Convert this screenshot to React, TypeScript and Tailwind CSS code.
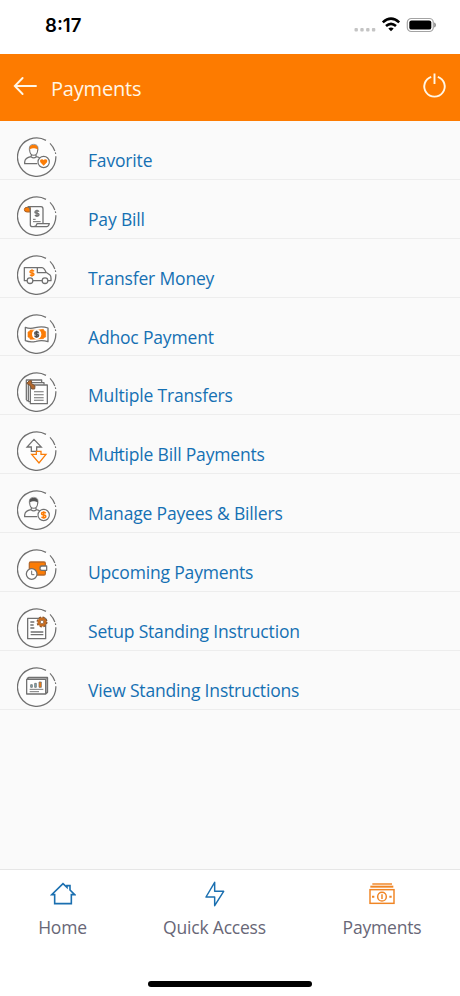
import React from "react";

interface MenuItem {
    label: string;
    icon: React.ReactNode;
    mark?: boolean;
}

const GRAY = "#707070";
const ORANGE = "#fb7c06";

const RingIcon: React.FC<{ children: React.ReactNode }> = ({ children }) => (
    <svg viewBox="0 0 120 120" className="h-10 w-10 shrink-0" fill="none" stroke={GRAY} strokeWidth="3.8" strokeLinejoin="round">
        <circle cx="59" cy="60" r="57.5" fill="#fdfdfd" stroke="none" />
        <path d="M87 10 A57.5 57.5 0 1 0 116.5 58" strokeWidth="3.8" />
        <path d="M99 19 Q109 29 113.5 42 M115 46 L116 51" strokeWidth="3.4" />
        {children}
    </svg>
);

const Dollar: React.FC<{ x: number; y: number; s?: number; color?: string }> = ({ x, y, s = 1, color = GRAY }) => (
    <path
        transform={`translate(${x} ${y}) scale(${s})`}
        d="M6 -5 Q4 -8 0 -8 Q-6 -8 -6 -4 Q-6 0 0 0 Q6 0 6 4 Q6 8 0 8 Q-4 8 -6 5 M0 -11 V11"
        stroke={color}
        strokeWidth="4.2"
    />
);

const Person: React.FC<{ hair: string }> = ({ hair }) => (
    <>
        <path d="M37 39 V34 Q37 23 50 23 Q63 23 63 34 V39 Q58 33 50 34 Q42 33 37 39 Z" fill={hair} stroke="none" />
        <path d="M37 40 V34 Q37 22 50 22 Q63 22 63 34 V40" strokeWidth="2" />
        <path d="M38 38 Q38 54 50 55 Q62 54 62 38" strokeWidth="3.2" />
        <path d="M43 54 V58 M57 54 V58" />
        <path d="M61 80 H23 V75 Q24 62 42 59 Q50 66 58 59 Q66 60 69 64" />
        <circle cx="80" cy="75" r="17" fill="#fff" strokeWidth="3.4" />
    </>
);

const items: MenuItem[] = [
    {
        label: "Favorite",
        icon: (
            <>
                <Person hair={ORANGE} />
                <path d="M80 86 L70 76 Q67 67 75 67 Q79 67 80 70 Q81 67 85 67 Q93 67 90 76 Z" fill={ORANGE} stroke="none" />
            </>
        ),
    },
    {
        label: "Pay Bill",
        icon: (
            <>
                <path d="M40 34 H30 Q22 34 22 41 Q22 48 30 48 H40 Z" fill={ORANGE} stroke="#a8642c" strokeWidth="3" />
                <path d="M32 32 H72 Q78 32 78 39 V82 M40 47 V87 Q40 92 47 92 H89 Q95 92 97 83 H60 Q58 92 50 92 M32 32 Q40 34 40 47" />
                <Dollar x={60} y={52} />
                <path d="M48 70 H56 M48 77 H71" strokeWidth="3" />
            </>
        ),
    },
    {
        label: "Transfer Money",
        icon: (
            <>
                <path d="M30 77 H22 V38 H75 Q82 39 87 52 L99 60 Q102 62 102 70 V77 H93 M76 77 H48" />
                <path d="M61 39 V53 H87" />
                <circle cx="39" cy="77" r="8.5" />
                <circle cx="84" cy="77" r="8.5" />
                <Dollar x={45} y={54} color={ORANGE} />
            </>
        ),
    },
    {
        label: "Adhoc Payment",
        icon: (
            <>
                <path d="M25 40 Q38 45 55 41 Q75 36 93 42 V83 Q75 77 57 82 Q40 86 25 80 Z" fill="#fff" />
                <path d="M40 48 Q58 50 79 46 Q80 52 86 53 V69 Q80 70 79 74 Q58 74 40 76 Q39 70 33 69 V54 Q39 53 40 48 Z" fill={ORANGE} stroke={ORANGE} strokeWidth="2" />
                <ellipse cx="59" cy="61" rx="14" ry="15" fill="#fff" stroke="none" />
                <ellipse cx="59" cy="61" rx="8" ry="11" fill="#bdbdbd" stroke="none" />
                <Dollar x={59} y={61} s={0.95} color="#4f4f4f" />
            </>
        ),
    },
    {
        label: "Multiple Transfers",
        icon: (
            <>
                <path d="M28 84 V24 H74 V30 M34 89 V32 H81 V38" />
                <path d="M28 86 H33 M34 89 H40" />
                <path d="M40 39 H91 V95 H40 Z" fill="#fff" />
                <path d="M51 59 H80 M51 68 H80 M51 77 H80 M51 85 H80" strokeWidth="3.2" />
                <path d="M29 34 L37 26 H44 L43 34 L54 42 L53 51 H44 L40 41 Z" fill="#b3672b" stroke="#7a5436" strokeWidth="3" />
            </>
        ),
    },
    {
        label: "Multiple Bill Payments",
        mark: true,
        icon: (
            <>
                <path d="M59 61 V48 H73 L51 25 L30 48 H43 V61 Z" strokeLinejoin="miter" />
                <path d="M58 61 H72 V70 H87 L66 96 L44 70 H58 Z" fill="#fafafa" stroke={ORANGE} strokeLinejoin="miter" />
            </>
        ),
    },
    {
        label: "Manage Payees & Billers",
        icon: (
            <>
                <Person hair="#555555" />
                <Dollar x={80} y={75} s={1.05} color={ORANGE} />
            </>
        ),
    },
    {
        label: "Upcoming Payments",
        icon: (
            <>
                <rect x="37" y="39" width="48" height="39" rx="4" fill={ORANGE} stroke="#b5682a" />
                <path d="M89 51 H74 Q69 51 69 58 Q69 64 74 64 H89 Z" fill="#fff" />
                <circle cx="44" cy="75" r="16" fill="#fff" />
                <path d="M44 65 V77 H52" strokeWidth="3" />
            </>
        ),
    },
    {
        label: "Setup Standing Instruction",
        icon: (
            <>
                <rect x="32" y="31" width="54" height="61" fill="#fff" />
                <path d="M40 42 H52 M40 51 H50 M40 60 H52 M41 72 H79 M41 80 H79" />
                <circle cx="75" cy="42" r="13.5" stroke="#7c5130" strokeWidth="6" strokeDasharray="6 4.6" />
                <circle cx="75" cy="42" r="9.5" fill="#fff" stroke="#c66d22" strokeWidth="8" />
                <circle cx="75" cy="42" r="5" fill="#fff" stroke="#7c5130" strokeWidth="2" />
            </>
        ),
    },
    {
        label: "View Standing Instructions",
        icon: (
            <>
                <path d="M30 35 L35 32 H91 V76 L86 80" strokeWidth="5" />
                <rect x="29" y="37" width="57" height="44" fill="#fff" />
                <path d="M41 53 H46 V61 H41 Z M53 49 H58 V61 H53 Z" fill="#7fb0ba" strokeWidth="2.4" />
                <path d="M66 45 H73 V61 H66 Z" fill={ORANGE} strokeWidth="2.4" />
                <path d="M38 67 H79 M38 74 H66" strokeWidth="2.8" />
            </>
        ),
    },
];

const StatusBar = () => (
    <div className="flex h-[54px] items-start justify-between bg-white pr-[23px] pl-[45px]">
        <span className="pt-[11px] font-[Inter,sans-serif] text-[18.6px] leading-7 font-semibold text-black">8:17</span>
        <div className="flex gap-[5px] pt-[16px]">
            <svg width="23" height="18" viewBox="0 0 23 18" fill="#c4c4c4">
                <rect x="1.5" y="12" width="3.4" height="3.4" rx="1" />
                <rect x="7.3" y="12" width="3.4" height="3.4" rx="1" />
                <rect x="13.1" y="12" width="3.4" height="3.4" rx="1" />
                <rect x="18.9" y="12" width="3.4" height="3.4" rx="1" />
            </svg>
            <svg width="20" height="18" viewBox="0 0 20 18" fill="none" stroke="#000" strokeWidth="2.6">
                <path d="M1.8 6.4 Q10 -1 18.2 6.4" />
                <path d="M5 10 Q10 5.6 15 10" />
                <path d="M10 15.2 L7.3 12.4 Q10 10.4 12.7 12.4 Z" fill="#000" stroke="none" />
            </svg>
            <svg width="31" height="18" viewBox="0 0 31 18">
                <rect x="1.3" y="2.5" width="26" height="13" rx="4" fill="none" stroke="#a3a3a3" strokeWidth="1.2" />
                <rect x="3.3" y="4.4" width="22" height="9.2" rx="2.2" fill="#000" />
                <path d="M28.7 6.8 Q30.4 9 28.7 11.2 Z" fill="#777" stroke="#777" strokeWidth="0.6" />
            </svg>
        </div>
    </div>
);

const Header = () => (
    <header className="flex h-[67px] items-center bg-[#fd7b00] pr-[13px] pl-[13px] text-white">
        <svg width="26" height="20" viewBox="0 0 26 20" className="mb-[3px]" fill="none" stroke="#fff6e6" strokeWidth="1.9" strokeLinecap="round">
            <path d="M23 10 H1.8 M9.6 2 L1.8 10 L9.6 18" />
        </svg>
        <h1 className="mt-0.5 ml-3 flex-1 text-[20px] leading-7 tracking-[-0.2px] text-[#fff6e6]">Payments</h1>
        <svg width="25" height="26" viewBox="0 0 25 26" className="mb-[6px]" fill="none" stroke="#fff6e6" strokeWidth="1.9">
            <path d="M9.2 4.8 A10.2 10.2 0 1 0 15.8 4.8 M12.5 1.5 V12" />
        </svg>
    </header>
);

const HomeIcon = () => (
    <svg width="26" height="24" viewBox="0 0 78 72" fill="none" stroke="#1a6fb0" strokeWidth="4.8">
        <path d="M14 38 H5 L39 5 L51 16 V11 H60 V24 L74 38 H64 V65 H14 Z" />
    </svg>
);

const BoltIcon = () => (
    <svg width="26" height="26" viewBox="0 0 78 78" fill="none" stroke="#1a6fb0" strokeWidth="4.4" strokeLinejoin="round">
        <path d="M38 4 L12 48 H38 V74 L65 31 H38 Z" />
    </svg>
);

const CashIcon = () => (
    <svg width="26" height="24" viewBox="0 0 78 72" fill="none" stroke="#f08524" strokeWidth="4.4">
        <path d="M10 6 H69" />
        <path d="M4 14 H73" strokeWidth="6" />
        <rect x="3" y="23" width="72" height="41" />
        <circle cx="39" cy="44" r="13" />
        <path d="M39 37 V51" />
        <path d="M9 44 H16 M61 44 H68" strokeWidth="6" />
    </svg>
);

const App: React.FC = () => {
    return (
        <div className="flex h-[996px] w-[460px] flex-col overflow-hidden bg-[#fafafa] font-['Open_Sans',sans-serif]">
            <StatusBar />
            <Header />

            <ul className="flex-1">
                {items.map((item) => (
                    <li key={item.label} className="flex h-[58.87px] items-start border-b border-[#ededed] pt-4 pl-[17px]">
                        <RingIcon>{item.icon}</RingIcon>
                        <span className="relative mt-[9px] ml-[31px] text-[17.5px] leading-7 tracking-[-0.17px] whitespace-nowrap text-[#1570b3]">
                            {item.label}
                            {item.mark && <span className="absolute top-[12px] left-[25px] h-px w-[8px] bg-[#1570b3]" />}
                        </span>
                    </li>
                ))}
            </ul>

            <nav className="relative flex h-[127px] border-t border-[#e6e6e6] bg-white text-[17.5px] tracking-[-0.2px] text-[#686777]">
                <button className="flex w-[125px] flex-col items-center pt-[11px]">
                    <span className="flex h-[26px] items-center"><HomeIcon /></span>
                    <span className="mt-[6px] leading-7">Home</span>
                </button>
                <button className="flex w-[179px] flex-col items-center pt-[11px]">
                    <span className="flex h-[26px] items-center"><BoltIcon /></span>
                    <span className="mt-[6px] leading-7">Quick Access</span>
                </button>
                <button className="flex w-[156px] flex-col items-center pt-[11px]">
                    <span className="flex h-[26px] items-center"><CashIcon /></span>
                    <span className="mt-[6px] leading-7">Payments</span>
                </button>
                <div className="absolute bottom-[9px] left-[148px] h-[6px] w-[164px] rounded-full bg-black" />
            </nav>
        </div>
    );
};

export default App;
